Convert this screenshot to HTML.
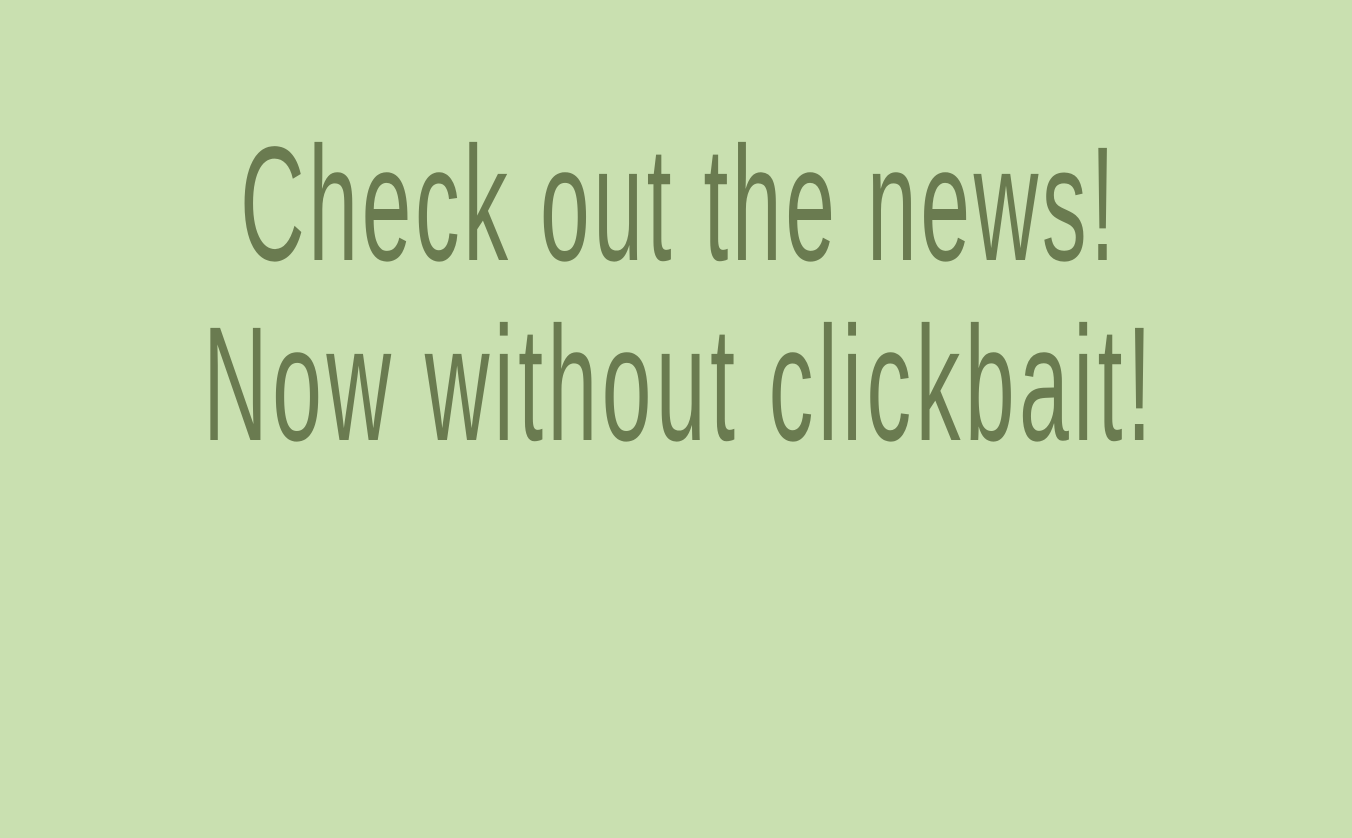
<!DOCTYPE html>
<html><head><meta charset="utf-8"><style>
html,body{margin:0;padding:0;background:#c9e0b0;width:1352px;height:838px;overflow:hidden}
svg{display:block}
text{font-family:"Liberation Sans",sans-serif;fill:#6a7b50;font-size:163px}
</style></head><body>
<svg width="1352" height="838" viewBox="0 0 1352 838">
<rect width="1352" height="838" fill="#c9e0b0"/>
<g transform="translate(240,260) scale(0.55,1)">
<text x="0" y="0" textLength="1591" lengthAdjust="spacing">Check out the news!</text>
</g>
<g transform="translate(203,440) scale(0.55,1)">
<text x="0" y="0" textLength="1725" lengthAdjust="spacing">Now without clickbait!</text>
</g>
</svg>
</body></html>
